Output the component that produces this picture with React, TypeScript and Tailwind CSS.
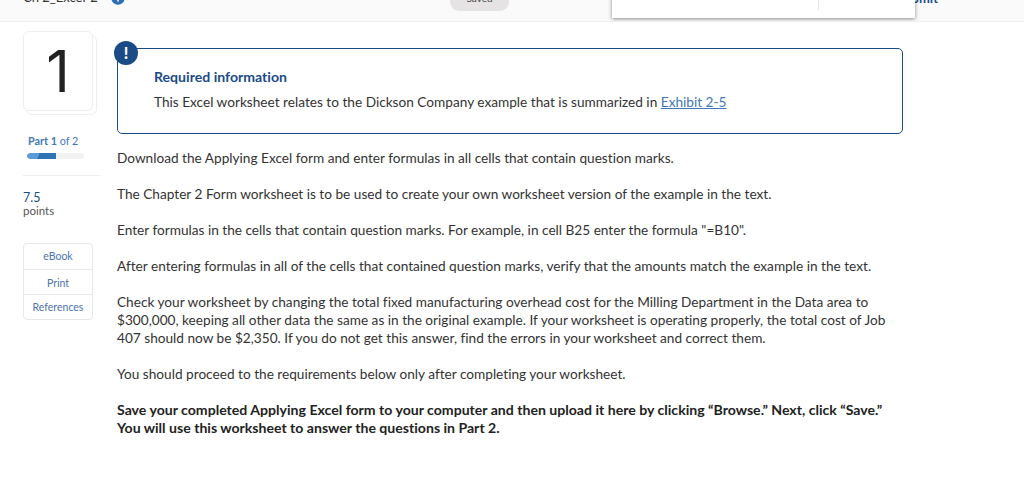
import React from 'react';
import { Info } from 'lucide-react';

const fontStack = { fontFamily: 'Lato, sans-serif' };

const paragraphs = [
  'Download the Applying Excel form and enter formulas in all cells that contain question marks.',
  'The Chapter 2 Form worksheet is to be used to create your own worksheet version of the example in the text.',
  'Enter formulas in the cells that contain question marks. For example, in cell B25 enter the formula "=B10".',
  'After entering formulas in all of the cells that contained question marks, verify that the amounts match the example in the text.',
  'Check your worksheet by changing the total fixed manufacturing overhead cost for the Milling Department in the Data area to $300,000, keeping all other data the same as in the original example. If your worksheet is operating properly, the total cost of Job 407 should now be $2,350. If you do not get this answer, find the errors in your worksheet and correct them.',
  'You should proceed to the requirements below only after completing your worksheet.',
];

// the header is scrolled mostly out of view, so its items hang off the top edge
const TopBar = () => (
  <div className="relative flex items-end h-[22px] pl-[23px] bg-[#fafafa] border-b border-[#f0f0f0] overflow-hidden">
    <span className="w-[86px] mb-[16px] text-[13px] leading-[16px] text-[#333]">Ch 2_Excel-2</span>
    <Info className="w-[18px] h-[18px] mb-[14px] shrink-0 fill-[#2f6db5] text-white" />
    <div className="ml-[323px] mb-[10px] w-[59px] h-[25px] shrink-0 rounded-[9px] bg-[#e5e3e4] text-center text-[10px] leading-[25px] text-[#444]">
      Saved
    </div>
    <span className="ml-[384px] w-[45px] mb-[15px] shrink-0 text-right text-[13px] leading-[16px] font-bold text-[#1a4b87]">
      Submit
    </span>
    <div className="absolute left-[612px] top-[-10px] w-[303px] h-[28px] bg-white shadow-[0_1px_4px_rgba(0,0,0,0.45)]">
      <div className="absolute left-[206px] top-0 h-[20px] w-px bg-[#e5e5e5]" />
    </div>
  </div>
);

const Sidebar = () => (
  <div className="w-[77px] shrink-0">
    <div className="relative w-[74px] h-[84px]">
      <div className="absolute left-[3px] top-[4px] w-[71px] h-[80px] rounded-[6px] border border-[#eeeeee]" />
      <div className="absolute left-0 top-0 w-[70px] h-[80px] rounded-[6px] border border-[#eeeeee] bg-white flex items-center justify-center text-[58px] leading-none font-normal text-[#222] font-['Inter']">
        1
      </div>
    </div>
    <div className="mt-[19px] pl-[5px] text-[10.8px] leading-[14px] text-[#3f77b8]">
      <span className="font-bold">Part 1</span> of 2
    </div>
    <div className="mt-[5px] ml-[4px] w-[57px] h-[6px] rounded-full bg-[#f2f2f2] overflow-hidden">
      <div className="h-full w-[29px] rounded-l-full bg-[linear-gradient(115deg,#5b9bd8_40%,#2f72b5_40%)]" />
    </div>
    <div className="mt-[16px] border-t border-[#eeeeee]" />
    <div className="mt-[15px] text-[12.5px] leading-[13px] text-[#1a4b87]">7.5</div>
    <div className="text-[11.5px] leading-[13px] text-[#555]">points</div>
    <div className="mt-[26px] w-[70px] rounded-[4px] border border-[#e8e8e8] text-center text-[10.5px] text-[#4a74b0]">
      <div className="h-[26px] leading-[25px] border-b border-[#e8e8e8]">eBook</div>
      <div className="h-[25px] leading-[26px] border-b border-[#e8e8e8]">Print</div>
      <div className="h-[24px] leading-[24px]">References</div>
    </div>
  </div>
);

const RequiredInfo = () => (
  <div className="relative h-[86px] rounded-[5px] border border-[#1a4b87] pl-[36px] pt-[19px]">
    <div className="absolute left-[-4px] top-[-8px] w-[24px] h-[24px] rounded-full bg-[#1a4b87] flex items-center justify-center text-[16px] font-black text-white">
      !
    </div>
    <div className="text-[14.1px] leading-[18px] font-bold text-[#1a4b87]">Required information</div>
    <div className="mt-[7px] text-[13.65px] leading-[18px] text-[#333]">
      This Excel worksheet relates to the Dickson Company example that is summarized in{' '}
      <span className="text-[#3f77b8] underline">Exhibit 2-5</span>
    </div>
  </div>
);

export default function App() {
  return (
    <div className="w-[1024px] h-[487px] bg-white overflow-hidden [font-variant-ligatures:none]" style={fontStack}>
      <TopBar />
      <div className="flex pl-[23px] pt-[9px]">
        <Sidebar />
        <div className="ml-[17px] w-[786px] pt-[17px]">
          <RequiredInfo />
          <div className="mt-[15px] text-[13.65px] leading-[18px] text-[#333]">
            {paragraphs.map((text) => (
              <p key={text} className="mb-[18px]">
                {text}
              </p>
            ))}
            <p className="text-[14.1px] font-bold text-[#222]">
              Save your completed Applying Excel form to your computer and then upload it here by clicking “Browse.” Next, click “Save.” You will use this worksheet to answer the questions in Part 2.
            </p>
          </div>
        </div>
      </div>
    </div>
  );
}
